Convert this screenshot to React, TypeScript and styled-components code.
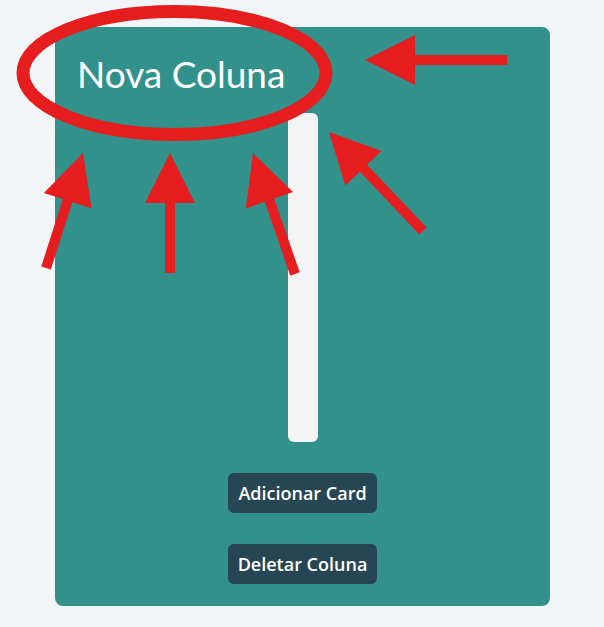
import styled, { createGlobalStyle } from "styled-components";

const GlobalStyle = createGlobalStyle`
  html, body {
    margin: 0;
    padding: 0;
    background: #f3f6f9;
    font-family: "Lato", "Open Sans", sans-serif;
  }
`;

const Page = styled.div`
  position: relative;
  width: 604px;
  height: 627px;
  padding: 27px 0 0 55px;
  box-sizing: border-box;
`;

const Column = styled.section`
  width: 495px;
  height: 579px;
  box-sizing: border-box;
  background: #32918b;
  border-radius: 8px;
  display: flex;
  flex-direction: column;
  align-items: center;
  padding: 24px 0 0;
`;

const Title = styled.h2`
  align-self: stretch;
  margin: 0 0 0 22px;
  color: #ffffff;
  font-size: 37px;
  font-weight: 400;
  line-height: 46px;
  height: 62px;
`;

const DropZone = styled.div`
  width: 30px;
  height: 329px;
  background: #f4f4f4;
  border-radius: 6px;
`;

const Button = styled.button`
  margin-top: ${(p: { $gap: number }) => p.$gap}px;
  height: 40px;
  padding: 0 10px;
  border: none;
  border-radius: 6px;
  background: #264653;
  color: #ffffff;
  font-family: "Open Sans", sans-serif;
  font-size: 18px;
  font-weight: 600;
  cursor: pointer;
`;

const Marks = styled.svg`
  position: absolute;
  top: 0;
  left: 0;
  pointer-events: none;
`;

type Pt = [number, number];

// arrow drawn from tail to tip: shaft + triangle head
const arrowPoints = (tail: Pt, tip: Pt) => {
  const head = 50;
  const half = 25;
  const shaft = 5;
  const dx = tail[0] - tip[0];
  const dy = tail[1] - tip[1];
  const len = Math.hypot(dx, dy);
  const ux = dx / len;
  const uy = dy / len;
  const px = -uy;
  const py = ux;
  const bx = tip[0] + ux * head;
  const by = tip[1] + uy * head;
  const pts: Pt[] = [
    tip,
    [bx + px * half, by + py * half],
    [bx + px * shaft, by + py * shaft],
    [tail[0] + px * shaft, tail[1] + py * shaft],
    [tail[0] - px * shaft, tail[1] - py * shaft],
    [bx - px * shaft, by - py * shaft],
    [bx - px * half, by - py * half],
  ];
  return pts.map((p) => p.join(",")).join(" ");
};

const arrows: [Pt, Pt][] = [
  [[507, 60], [365, 60]],
  [[423, 231], [329, 132]],
  [[46, 268], [83, 153]],
  [[170, 273], [170, 153]],
  [[295, 274], [253, 153]],
];

export default function App() {
  return (
    <>
      <GlobalStyle />
      <Page>
        <Column>
          <Title>Nova Coluna</Title>
          <DropZone />
          <Button $gap={31}>Adicionar Card</Button>
          <Button $gap={31}>Deletar Coluna</Button>
        </Column>
        <Marks width="604" height="627" viewBox="0 0 604 627">
          <ellipse
            cx="174.5"
            cy="73"
            rx="151.5"
            ry="61.5"
            fill="none"
            stroke="#e51d1f"
            strokeWidth="13"
          />
          {arrows.map(([tail, tip], i) => (
            <polygon key={i} points={arrowPoints(tail, tip)} fill="#e51d1f" />
          ))}
        </Marks>
      </Page>
    </>
  );
}
